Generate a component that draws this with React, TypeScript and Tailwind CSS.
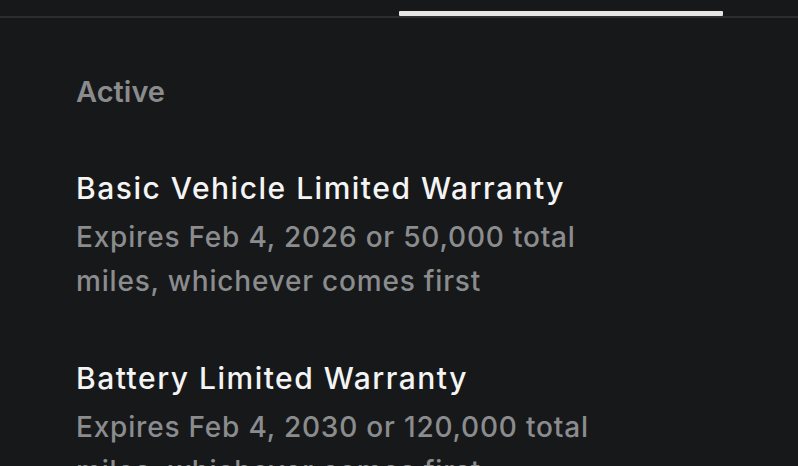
const warranties = [
  {
    title: "Basic Vehicle Limited Warranty",
    detail: "Expires Feb 4, 2026 or 50,000 total miles, whichever comes first",
  },
  {
    title: "Battery Limited Warranty",
    detail: "Expires Feb 4, 2030 or 120,000 total miles, whichever comes first",
  },
];

export default function App() {
  return (
    <div
      className="h-[466px] w-[798px] overflow-hidden bg-[#17181a] antialiased"
      style={{ fontFamily: "Inter, 'Noto Sans', sans-serif" }}
    >
      {/* tab bar */}
      <div className="h-[18px] border-b-[2px] border-[#2c2d2f] pt-[11px]">
        <div className="ml-[399px] h-[5px] w-[324px] rounded-[1px] bg-[#e4e4e4]" />
      </div>

      <div className="pl-[76px]">
        <div className="mt-[52px] text-[29px] font-semibold leading-[44px] text-[#8a8b8d]">Active</div>

        {warranties.map((w, i) => (
          <div key={i} className={i === 0 ? "mt-[52px]" : "mt-[53px]"}>
            <div className="text-[30px] font-medium leading-[44px] tracking-[1.5px] text-[#f4f4f4]">{w.title}</div>
            <div className="mt-[5px] w-[540px] text-[28px] font-medium leading-[44px] tracking-[0.8px] text-[#8b8c8e]">
              {w.detail}
            </div>
          </div>
        ))}
      </div>
    </div>
  );
}
